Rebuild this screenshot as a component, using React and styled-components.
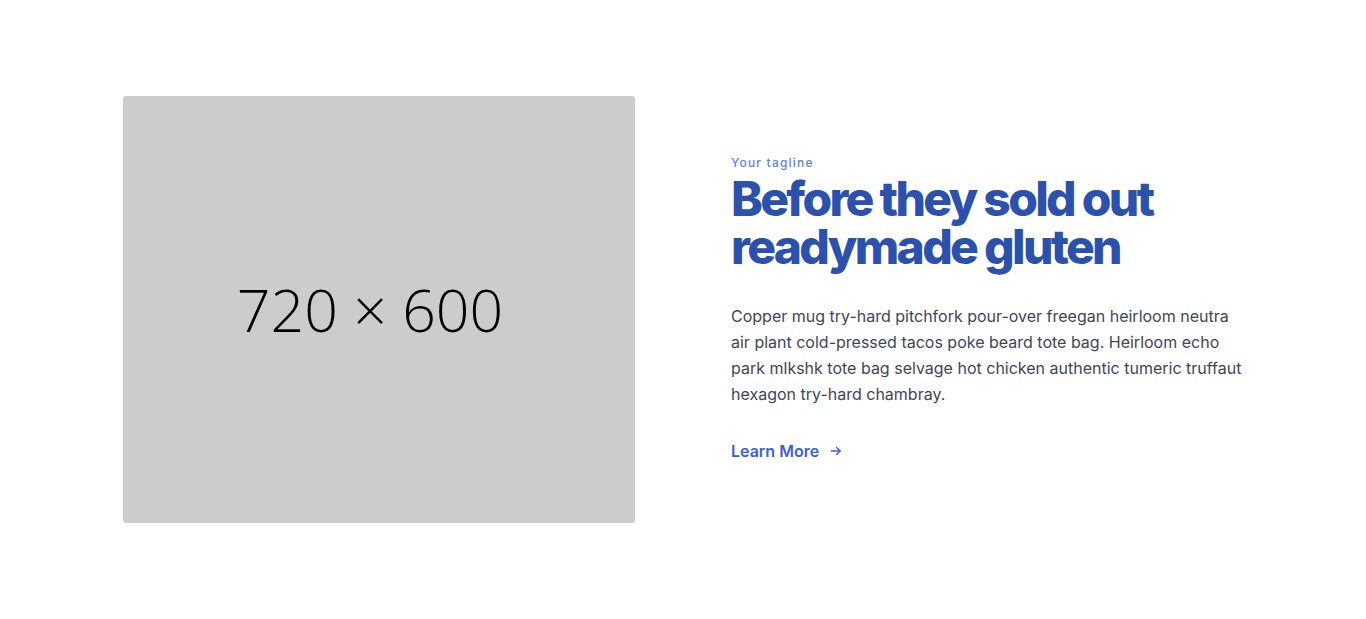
import React from "react";
import styled, { createGlobalStyle } from "styled-components";

const GlobalStyle = createGlobalStyle`
  * { box-sizing: border-box; }
  body {
    margin: 0;
    background: #ffffff;
    font-family: Inter, "Noto Sans", sans-serif;
  }
`;

const Section = styled.section`
  padding: 96px 0;
`;

const Container = styled.div`
  max-width: 1120px;
  margin: 0 auto;
  display: grid;
  grid-template-columns: 512px 512px;
  column-gap: 96px;
  align-items: center;
`;

const Placeholder = styled.div`
  aspect-ratio: 720 / 600;
  width: 100%;
  padding-right: 18px;
  background: #cccccc;
  border-radius: 3px;
  display: flex;
  align-items: center;
  justify-content: center;
  font-family: "Open Sans", sans-serif;
  font-weight: 300;
  font-size: 59px;
  color: #000000;
`;

const Content = styled.div`
  display: flex;
  flex-direction: column;
  align-items: flex-start;
  padding-bottom: 4px;
`;

const Tagline = styled.span`
  font-size: 12px;
  line-height: 22px;
  font-weight: 500;
  letter-spacing: 0.1em;
  color: #5b7ef0;
`;

const Heading = styled.h2`
  margin: 1px 0 0;
  font-size: 48px;
  line-height: 48px;
  font-weight: 800;
  letter-spacing: -0.056em;
  color: #2b51ad;
`;

const Text = styled.p`
  margin: 32px 0 0;
  font-size: 16px;
  line-height: 26px;
  color: #3f4654;
`;

const MoreLink = styled.a`
  margin-top: 32px;
  display: inline-flex;
  align-items: center;
  gap: 10px;
  font-size: 16px;
  line-height: 24px;
  font-weight: 600;
  color: #3c5fdb;
  text-decoration: none;
  cursor: pointer;
`;

const Arrow = () => (
  <svg width="14" height="14" viewBox="0 0 24 24" fill="none" stroke="currentColor" strokeWidth="2.4" strokeLinecap="round" strokeLinejoin="round">
    <path d="M4 12h15" />
    <path d="M13 6l6 6-6 6" />
  </svg>
);

export default function App() {
  return (
    <>
      <GlobalStyle />
      <Section>
        <Container>
          <Placeholder>720 × 600</Placeholder>
          <Content>
            <Tagline>Your tagline</Tagline>
            <Heading>
              Before they sold out
              <br />
              readymade gluten
            </Heading>
            <Text>
              Copper mug try-hard pitchfork pour-over freegan heirloom neutra
              air plant cold-pressed tacos poke beard tote bag. Heirloom echo
              park mlkshk tote bag selvage hot chicken authentic tumeric
              truffaut hexagon try-hard chambray.
            </Text>
            <MoreLink>
              Learn More
              <Arrow />
            </MoreLink>
          </Content>
        </Container>
      </Section>
    </>
  );
}
